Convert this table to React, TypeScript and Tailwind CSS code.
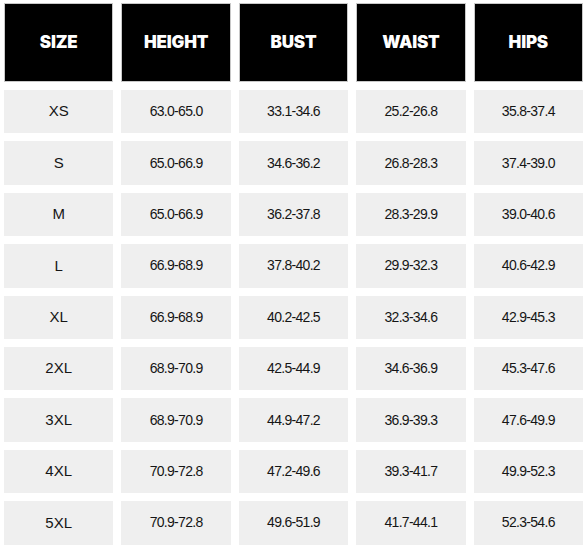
const headers = ["SIZE", "HEIGHT", "BUST", "WAIST", "HIPS"];

const rows = [
  ["XS", "63.0-65.0", "33.1-34.6", "25.2-26.8", "35.8-37.4"],
  ["S", "65.0-66.9", "34.6-36.2", "26.8-28.3", "37.4-39.0"],
  ["M", "65.0-66.9", "36.2-37.8", "28.3-29.9", "39.0-40.6"],
  ["L", "66.9-68.9", "37.8-40.2", "29.9-32.3", "40.6-42.9"],
  ["XL", "66.9-68.9", "40.2-42.5", "32.3-34.6", "42.9-45.3"],
  ["2XL", "68.9-70.9", "42.5-44.9", "34.6-36.9", "45.3-47.6"],
  ["3XL", "68.9-70.9", "44.9-47.2", "36.9-39.3", "47.6-49.9"],
  ["4XL", "70.9-72.8", "47.2-49.6", "39.3-41.7", "49.9-52.3"],
  ["5XL", "70.9-72.8", "49.6-51.9", "41.7-44.1", "52.3-54.6"],
];

export default function App() {
  return (
    <div className="w-[588px] h-[548px] bg-white pt-[3px] pl-[4px] pr-[5px]">
      {/* Size chart */}
      <div className="grid grid-cols-5 gap-x-[8px] gap-y-[8px] grid-rows-[79px_repeat(9,43.4px)]">
        {headers.map((h) => (
          <div
            key={h}
            className="flex items-center justify-center bg-black border border-[#c8c8c8] text-white text-[17px] font-black font-['Inter',sans-serif] tracking-[-0.2px]"
          >
            {h}
          </div>
        ))}
        {rows.map((row) =>
          row.map((cell, i) => (
            <div
              key={row[0] + i}
              className={
                i === 0
                  ? "flex items-center justify-center bg-[#efefef] text-[#151515] text-[15px] font-['Liberation_Sans',Arial,sans-serif]"
                  : "flex items-center justify-center bg-[#efefef] text-[#151515] text-[14px] tracking-[-0.7px] font-['Liberation_Sans',Arial,sans-serif]"
              }
            >
              {cell}
            </div>
          ))
        )}
      </div>
    </div>
  );
}
